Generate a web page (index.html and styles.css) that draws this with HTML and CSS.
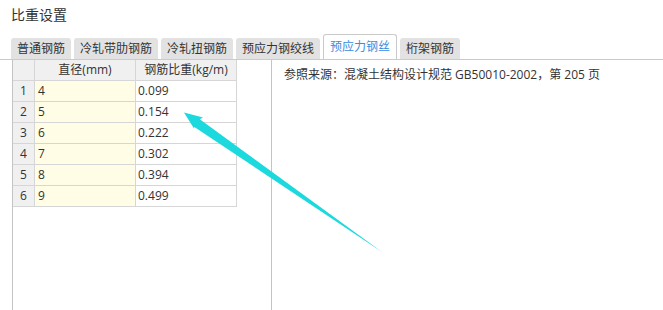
FILE: index.html
```html
<!DOCTYPE html>
<html lang="zh">
<head>
<meta charset="utf-8">
<title>比重设置</title>
<link rel="stylesheet" href="styles.css">
</head>
<body>
<div class="page">
  <div class="title">比重设置</div>
  <div class="tabs">
    <div class="tab">普通钢筋</div>
    <div class="tab">冷轧带肋钢筋</div>
    <div class="tab">冷轧扭钢筋</div>
    <div class="tab">预应力钢绞线</div>
    <div class="tab active">预应力钢丝</div>
    <div class="tab">桁架钢筋</div>
  </div>
  <div class="content">
    <div class="left">
      <div class="grid">
        <div class="cell head rh"></div>
        <div class="cell head">直径(mm)</div>
        <div class="cell head">钢筋比重(kg/m)</div>

        <div class="cell rh">1</div><div class="cell dia">4</div><div class="cell val">0.099</div>
        <div class="cell rh">2</div><div class="cell dia">5</div><div class="cell val">0.154</div>
        <div class="cell rh">3</div><div class="cell dia">6</div><div class="cell val">0.222</div>
        <div class="cell rh">4</div><div class="cell dia">7</div><div class="cell val">0.302</div>
        <div class="cell rh">5</div><div class="cell dia">8</div><div class="cell val">0.394</div>
        <div class="cell rh">6</div><div class="cell dia">9</div><div class="cell val">0.499</div>
      </div>
    </div>
    <div class="right">参照来源：混凝土结构设计规范 GB50010-2002，第 205 页</div>
  </div>
  <svg class="arrow" width="663" height="310" viewBox="0 0 663 310">
    <polygon points="184,112.5 203,117.5 199.8,119.2 382,252 194.4,126.9 194,128.5" fill="#1bd9dc"/>
  </svg>
</div>
</body>
</html>
```
FILE: styles.css
```css
html, body {
  margin: 0;
  padding: 0;
  background: #fff;
}
body {
  font-family: "Open Sans", "Noto Sans CJK SC", sans-serif;
  color: #333;
  font-size: 12px;
}
.page {
  position: relative;
  width: 663px;
  height: 310px;
  overflow: hidden;
}
.title {
  height: 34px;
  box-sizing: border-box;
  padding: 6px 0 0 11px;
  font-size: 14px;
  line-height: 18px;
  color: #333;
}
.tabs {
  display: flex;
  align-items: flex-end;
  gap: 3px;
  height: 25px;
  padding-left: 11px;
  border-bottom: 1px solid #cacaca;
}
.tab {
  height: 21px;
  line-height: 21px;
  padding: 0 6px;
  background: #e2e2e2;
  border-radius: 3px 3px 0 0;
  color: #333;
  white-space: nowrap;
}
.tab.active {
  height: 24px;
  line-height: 24px;
  background: #fff;
  border: 1px solid #cacaca;
  border-bottom: none;
  color: #3a8de0;
}
.content {
  display: flex;
  height: 250px;
}
.left {
  width: 258px;
  margin-left: 12px;
  border-left: 1px solid #c4c4c4;
  border-right: 1px solid #c4c4c4;
}
.grid {
  display: grid;
  grid-template-columns: 22px 101px 101px;
  grid-auto-rows: 21px;
}
.cell {
  box-sizing: border-box;
  border-right: 1px solid #d6d6d6;
  border-bottom: 1px solid #d6d6d6;
  line-height: 20px;
  padding: 0 3px;
  white-space: nowrap;
  overflow: hidden;
}
.head {
  background: #f0f0f0;
  text-align: center;
}
.rh {
  background: #f0f0f0;
  text-align: center;
  padding: 0;
}
.dia {
  background: #fffde6;
}
.val {
  background: #fff;
  padding-left: 2px;
}
.right {
  flex: 1;
  padding: 6px 0 0 12px;
  line-height: 17px;
  color: #333;
  white-space: nowrap;
}
.arrow {
  position: absolute;
  left: 0;
  top: 0;
  pointer-events: none;
}
```
